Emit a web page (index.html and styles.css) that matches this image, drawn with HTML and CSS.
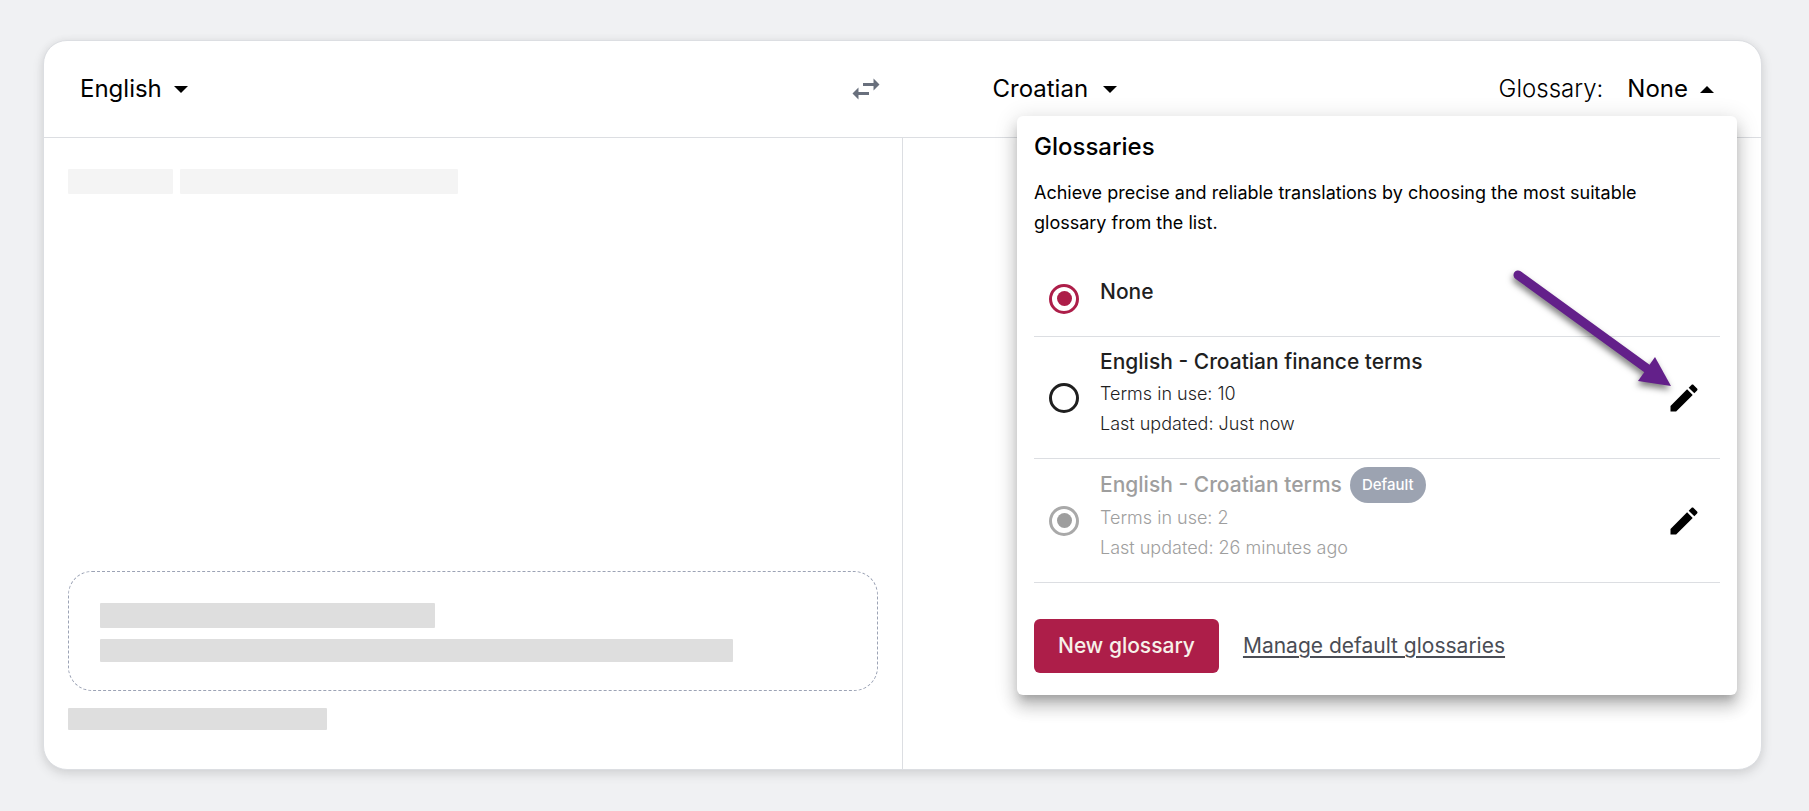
FILE: index.html
```html
<!DOCTYPE html>
<html lang="en">
<head>
  <meta charset="utf-8">
  <meta name="viewport" content="width=device-width, initial-scale=1">
  <title>Translate</title>
  <link rel="stylesheet" href="styles.css">
</head>
<body>
  <main class="card">
    <header class="bar">
      <div class="bar-source">
        <button class="picker" type="button" aria-haspopup="listbox">English
          <svg class="caret" viewBox="0 0 14 7" aria-hidden="true"><path d="M0 0h14L7 7z"/></svg>
        </button>
        <button class="swap" type="button" aria-label="Swap languages">
          <svg viewBox="0 0 24 24" aria-hidden="true"><path d="M6.99 11L3 15l3.99 4v-3H14v-2H6.99v-3zM21 9l-3.99-4v3H10v2h7.01v3L21 9z"/></svg>
        </button>
      </div>
      <div class="bar-target">
        <button class="picker picker-wide" type="button" aria-haspopup="listbox">Croatian
          <svg class="caret" viewBox="0 0 14 7" aria-hidden="true"><path d="M0 0h14L7 7z"/></svg>
        </button>
        <div class="glossary">
          <span class="glossary-label" id="glossary-label">Glossary:</span>
          <button class="picker" type="button" aria-haspopup="dialog" aria-expanded="true" aria-describedby="glossary-label">None
            <svg class="caret" viewBox="0 0 14 7" aria-hidden="true"><path d="M0 7h14L7 0z"/></svg>
          </button>
        </div>
      </div>
    </header>

    <div class="panes">
      <section class="pane pane-source">
        <div class="hint">
          <span class="bone bone-light bone-xs"></span>
          <span class="bone bone-light bone-sm"></span>
        </div>
        <div class="drop">
          <span class="bone bone-title"></span>
          <span class="bone bone-text"></span>
        </div>
        <span class="bone bone-foot"></span>
      </section>
      <section class="pane"></section>
    </div>

    <section class="popover" role="dialog" aria-labelledby="popover-title">
      <h2 class="popover-title" id="popover-title">Glossaries</h2>
      <p class="popover-text">Achieve precise and reliable translations by choosing the most suitable glossary from the list.</p>
      <ul class="list">
        <li class="row">
          <input class="radio" type="radio" name="glossary" id="g-none" checked>
          <label class="row-body row-body-single" for="g-none"><span class="row-name">None</span></label>
        </li>
        <li class="row">
          <input class="radio" type="radio" name="glossary" id="g-finance">
          <label class="row-body" for="g-finance">
            <span class="row-name">English - Croatian finance terms</span>
            <span class="row-meta">Terms in use: 10</span>
            <span class="row-meta">Last updated: Just now</span>
          </label>
          <button class="edit" type="button" aria-label="Edit English - Croatian finance terms">
            <svg viewBox="0 0 24 24" aria-hidden="true"><path d="M3 17.25V21h3.75L17.81 9.94l-3.75-3.75L3 17.25zM20.71 7.04c.39-.39.39-1.02 0-1.41l-2.34-2.34c-.39-.39-1.02-.39-1.41 0l-1.83 1.83 3.75 3.75 1.83-1.83z"/></svg>
          </button>
        </li>
        <li class="row row-disabled">
          <input class="radio" type="radio" name="default-glossary" id="g-default" checked disabled>
          <label class="row-body" for="g-default">
            <span class="row-name">English - Croatian terms <span class="badge">Default</span></span>
            <span class="row-meta">Terms in use: 2</span>
            <span class="row-meta">Last updated: 26 minutes ago</span>
          </label>
          <button class="edit" type="button" aria-label="Edit English - Croatian terms">
            <svg viewBox="0 0 24 24" aria-hidden="true"><path d="M3 17.25V21h3.75L17.81 9.94l-3.75-3.75L3 17.25zM20.71 7.04c.39-.39.39-1.02 0-1.41l-2.34-2.34c-.39-.39-1.02-.39-1.41 0l-1.83 1.83 3.75 3.75 1.83-1.83z"/></svg>
          </button>
        </li>
      </ul>
      <div class="actions">
        <button class="primary" type="button">New glossary</button>
        <a class="link" href="#manage">Manage default glossaries</a>
      </div>
      <svg class="pointer" viewBox="0 0 170 130" aria-hidden="true">
        <path d="M11 9L142 104" fill="none" stroke="#63208a" stroke-width="9" stroke-linecap="round"/>
        <path d="M164 120L148 91L131 115z" fill="#63208a"/>
      </svg>
    </section>
  </main>
</body>
</html>
```
FILE: styles.css
```css
* { box-sizing: border-box; }

body {
  margin: 0;
  min-height: 100vh;
  display: flex;
  padding: 40px 47px 41px 43px;
  background: #f0f1f3;
  color: #000;
  font: 400 24px/36px Inter, "Liberation Sans", sans-serif;
}

button {
  margin: 0;
  padding: 0;
  border: 0;
  background: none;
  color: inherit;
  font: inherit;
  cursor: pointer;
}

svg { display: block; fill: currentColor; }

.card {
  position: relative;
  flex: 1;
  display: flex;
  flex-direction: column;
  background: #fff;
  border: 1px solid #dcdee2;
  border-radius: 24px;
  box-shadow: 0 4px 12px rgba(0, 0, 0, 0.12), 0 0 8px rgba(0, 0, 0, 0.04);
}

.bar {
  display: grid;
  grid-template-columns: 1fr 1fr;
  height: 97px;
  border-bottom: 1px solid #dcdee2;
}

.bar-source, .bar-target {
  display: flex;
  align-items: center;
  justify-content: space-between;
}

.bar-source { padding: 0 19px 0 36px; }
.bar-target { padding: 0 47px 0 90px; }

.picker { display: flex; align-items: center; gap: 12px; }
.picker-wide { gap: 15px; }
.caret { width: 14px; height: 7px; }

.swap { color: #69707d; }
.swap svg { width: 36px; height: 36px; }

.glossary { display: flex; gap: 24px; }
.glossary-label { font-weight: 300; }

.panes {
  flex: 1;
  display: grid;
  grid-template-columns: 1fr 1fr;
}

.pane-source {
  display: flex;
  flex-direction: column;
  padding: 31px 24px 39px;
  border-right: 1px solid #dcdee2;
}

.bone { display: block; background: #dedede; border-radius: 1px; }
.bone-light { background: #f4f4f4; }
.hint { display: flex; gap: 7px; margin-bottom: auto; }
.hint .bone { height: 25px; }
.bone-xs { width: 105px; }
.bone-sm { width: 278px; }

.drop {
  display: grid;
  gap: 11px;
  padding: 31px;
  padding-bottom: 28px;
  border: 1px dashed #9ca3b5;
  border-radius: 24px;
}

.bone-title { width: 335px; height: 25px; }
.bone-text { width: 633px; max-width: 100%; height: 23px; }
.bone-foot { width: 259px; height: 22px; margin-top: 17px; }

.popover {
  position: absolute;
  top: 75px;
  right: 24px;
  width: 720px;
  padding: 16px 17px 22px;
  background: #fff;
  border-radius: 6px;
  box-shadow:
    0 8px 8px -4px rgba(0, 0, 0, 0.2),
    0 12px 15px 2px rgba(0, 0, 0, 0.14),
    0 4px 21px 3px rgba(0, 0, 0, 0.12);
}

.popover-title { margin: 0; font-size: 24px; line-height: 30px; font-weight: 500; }

.popover-text {
  margin: 16px 0 0;
  max-width: 640px;
  font-size: 18px;
  line-height: 30px;
}

.list { margin: 23px 0 0; padding: 0; list-style: none; }

.row {
  display: flex;
  align-items: center;
  gap: 21px;
  padding: 0 18px 0 15px;
  border-bottom: 1px solid #dcdee2;
  color: #1f1f1f;
}

.row-body { flex: 1; display: grid; padding: 8px 0 19px; }
.row-body-single { padding: 14px 0 27px; }
.row-name {
  display: flex;
  align-items: center;
  gap: 8px;
  font-size: 21px;
  line-height: 34px;
  font-weight: 500;
}
.row-meta { font-size: 18px; line-height: 30px; font-weight: 300; }
.row-disabled .row-body { color: #9e9e9e; }

.radio {
  appearance: none;
  display: grid;
  place-items: center;
  width: 30px;
  height: 30px;
  margin: 0;
  border: 3px solid #1f1f1f;
  border-radius: 50%;
}
.radio:checked { border-color: #ad1e49; }
.radio:checked::before {
  content: "";
  width: 15px;
  height: 15px;
  border-radius: 50%;
  background: #ad1e49;
}
.radio:disabled { border-color: #a9a9a9; }
.radio:disabled::before { background: #9e9e9e; }

.badge {
  padding: 3px 12px;
  border-radius: 18px;
  background: #9ca3b1;
  color: #fff;
  font-size: 15px;
  line-height: 30px;
}

.edit { color: #000; }
.edit svg { width: 36px; height: 36px; }

.actions { display: flex; align-items: center; gap: 24px; margin-top: 36px; }

.primary {
  height: 54px;
  padding: 0 24px;
  border-radius: 6px;
  background: #ad1e49;
  color: #f7f1ea;
  font-size: 21px;
  font-weight: 500;
}

.link {
  color: #4a4d55;
  font-size: 21px;
  text-decoration-thickness: 2px;
  text-underline-offset: 3px;
}

/* Callout arrow aimed at the first edit button */
.pointer {
  position: absolute;
  top: 150px;
  right: 60px;
  width: 170px;
  height: 130px;
  pointer-events: none;
  filter: drop-shadow(-1px 4px 3px rgba(0, 0, 0, 0.5));
}
```
